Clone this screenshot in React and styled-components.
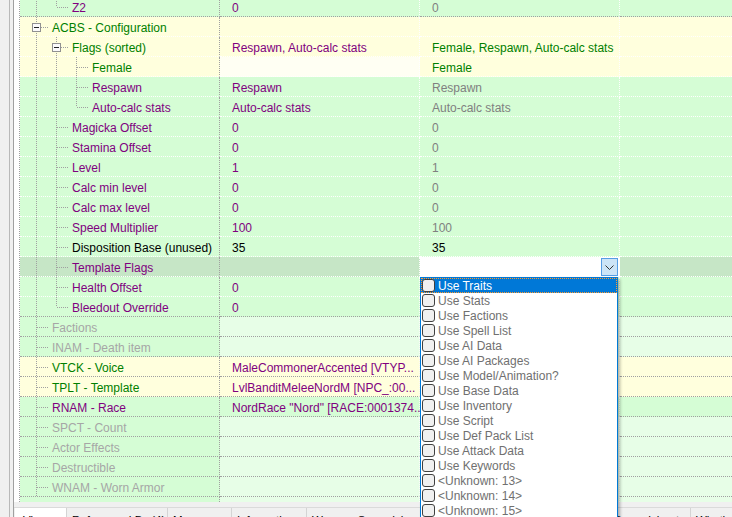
import React from 'react';
import styled, {createGlobalStyle} from 'styled-components';

const PURPLE = '#800080';
const GREEN = '#008000';
const GRAY = '#808080';
const FADED = '#a6a6a6';
const BLACK = '#000000';
const LINE = '#a0a0a0';

const TONES = {
  g: '#d5fdd5',
  y: '#ffffdd',
  p: '#fffff3',
  l: '#e7fee7',
  s: '#c6e6c6',
  w: '#ffffff',
};

const ROWS = [
  {label: 'Z2', level: 2, v2: '0', v3: '0'},
  {label: 'ACBS - Configuration', level: 1, kids: true, color: GREEN, tones: 'yyyy'},
  {label: 'Flags (sorted)', level: 2, kids: true, color: GREEN, v2: 'Respawn, Auto-calc stats', v3: 'Female, Respawn, Auto-calc stats', c3: GREEN, tones: 'yyyy'},
  {label: 'Female', level: 3, color: GREEN, v3: 'Female', c3: GREEN, tones: 'ypyy'},
  {label: 'Respawn', level: 3, v2: 'Respawn', v3: 'Respawn'},
  {label: 'Auto-calc stats', level: 3, v2: 'Auto-calc stats', v3: 'Auto-calc stats'},
  {label: 'Magicka Offset', level: 2, v2: '0', v3: '0'},
  {label: 'Stamina Offset', level: 2, v2: '0', v3: '0'},
  {label: 'Level', level: 2, v2: '1', v3: '1'},
  {label: 'Calc min level', level: 2, v2: '0', v3: '0'},
  {label: 'Calc max level', level: 2, v2: '0', v3: '0'},
  {label: 'Speed Multiplier', level: 2, v2: '100', v3: '100'},
  {label: 'Disposition Base (unused)', level: 2, color: BLACK, v2: '35', c2: BLACK, v3: '35', c3: BLACK},
  {label: 'Template Flags', level: 2, tones: 'ssws', editor: true},
  {label: 'Health Offset', level: 2, v2: '0', v3: '0'},
  {label: 'Bleedout Override', level: 2, v2: '0', v3: '0'},
  {label: 'Factions', level: 1, color: FADED, tones: 'glll'},
  {label: 'INAM - Death item', level: 1, color: FADED, tones: 'glll'},
  {label: 'VTCK - Voice', level: 1, color: GREEN, v2: 'MaleCommonerAccented [VTYP...', tones: 'yyyy'},
  {label: 'TPLT - Template', level: 1, color: GREEN, v2: 'LvlBanditMeleeNordM [NPC_:00...', tones: 'yyyy'},
  {label: 'RNAM - Race', level: 1, v2: 'NordRace "Nord" [RACE:0001374...'},
  {label: 'SPCT - Count', level: 1, color: FADED, tones: 'glll'},
  {label: 'Actor Effects', level: 1, color: FADED, tones: 'glll'},
  {label: 'Destructible', level: 1, color: FADED, tones: 'glll'},
  {label: 'WNAM - Worn Armor', level: 1, color: FADED, tones: 'glll'},
];

const FLAGS = [
  'Use Traits', 'Use Stats', 'Use Factions', 'Use Spell List', 'Use AI Data',
  'Use AI Packages', 'Use Model/Animation?', 'Use Base Data', 'Use Inventory',
  'Use Script', 'Use Def Pack List', 'Use Attack Data', 'Use Keywords',
  '<Unknown: 13>', '<Unknown: 14>', '<Unknown: 15>',
];

const TABS = [
  {label: 'View', width: 52, active: true},
  {label: 'Referenced By (4)', width: 101},
  {label: 'Messages', width: 64},
  {label: 'Information', width: 75},
  {label: 'Weapon Spreadsheet', width: 120},
  {label: 'Armor Spreadsheet', width: 118},
  {label: 'Ammunition Spreadsheet', width: 146},
  {label: "What's New", width: 70},
];

// works out which guide lines carry on past each row
const treeRows = ROWS.map((row, i) => {
  const continues = lvl => {
    for (let j = i + 1; j < ROWS.length; j++) {
      if (ROWS[j].level <= lvl) return ROWS[j].level === lvl;
    }
    return true;
  };
  const cont = {};
  for (let l = 1; l < row.level; l++) cont[l] = continues(l);
  const next = ROWS[i + 1];
  return {
    color: PURPLE, c2: PURPLE, c3: GRAY, tones: 'gggg',
    ...row,
    cont,
    hasNext: continues(row.level),
    boundary: !next || next.level === 1,
  };
});

const GlobalStyle = createGlobalStyle`
  html, body {
    margin: 0;
    padding: 0;
    background: #f0f0f0;
  }
  body {
    font-family: "Liberation Sans", Arial, sans-serif;
    font-size: 12px;
  }
`;

const Window = styled.div`
  width: 732px;
  height: 517px;
  overflow: hidden;
  display: flex;
  background: #f0f0f0;
`;

const SideStrip = styled.div`
  width: 13px;
  flex: none;
  border-right: 1px solid #a0a0a0;
  background: linear-gradient(to right, #f0f0f0 9px, #b9b9b9 9px, #b9b9b9 10px, #f0f0f0 10px);
`;

const Main = styled.div`
  flex: 1;
  min-width: 0;
  display: flex;
  flex-direction: column;
`;

const TreeFrame = styled.div`
  height: 502px;
  flex: none;
  display: flex;
  background: #ffffff;
  padding-left: 5px;
`;

const Tree = styled.div`
  flex: 1;
  min-width: 0;
  align-self: flex-start;
  height: 505px;
  margin-top: -3px;
  display: flex;
  flex-direction: column;
  border-left: 1px dotted ${LINE};
`;

const Row = styled.div`
  display: flex;
  flex: ${p => p.$fill ? '1' : 'none'};
  height: ${p => p.$fill ? 'auto' : '20px'};
`;

const Cell = styled.div`
  position: relative;
  box-sizing: border-box;
  display: flex;
  align-items: flex-start;
  flex: ${p => p.$grow ? '1 1 auto' : 'none'};
  width: ${p => p.$grow ? 'auto' : '200px'};
  min-width: 0;
  background: ${p => TONES[p.$tone]};
  border-bottom: ${p => p.$rule ? `1px dotted ${p.$rule}` : 'none'};
  border-right: ${p => p.$edge ? `1px dotted ${p.$edge}` : 'none'};
`;

const Text = styled.span`
  flex: 1;
  min-width: 0;
  white-space: nowrap;
  padding: 2px 0 0 ${p => p.$pad}px;
  line-height: 19px;
  color: ${p => p.$color};
`;

const Gutter = styled.svg`
  display: block;
  flex: none;
`;

const Editor = styled.div`
  flex: 1;
  height: 19px;
  display: flex;
  justify-content: flex-end;
  padding: 1px 1px 0 0;
  box-sizing: border-box;
`;

const DropButton = styled.div`
  width: 17px;
  height: 18px;
  box-sizing: border-box;
  background: #cce4f7;
  border: 1px solid #569de5;
  display: flex;
  align-items: center;
  justify-content: center;
`;

const DropList = styled.div`
  position: absolute;
  left: 0;
  top: 20px;
  width: 198px;
  height: 260px;
  z-index: 5;
  box-sizing: border-box;
  background: #ffffff;
  border: 1px solid #0078d7;
  box-shadow: 2px 2px 3px rgba(0, 0, 0, 0.3);
  display: flex;
  flex-direction: column;
`;

const FlagItem = styled.div`
  height: 15px;
  flex: none;
  display: flex;
  align-items: center;
  gap: 3px;
  padding-left: 1px;
  background: ${p => p.$active ? '#0078d7' : 'transparent'};
  color: ${p => p.$active ? '#ffffff' : '#707070'};
  outline: ${p => p.$active ? '1px dotted #ff9a2e' : 'none'};
  outline-offset: -1px;
  white-space: nowrap;
`;

const FlagLabel = styled.span`
  align-self: stretch;
  box-sizing: border-box;
  padding-top: 1px;
  line-height: 15px;
`;

const CheckBox = styled.span`
  width: 13px;
  height: 13px;
  box-sizing: border-box;
  flex: none;
  border: 1px solid #404040;
  border-radius: 3px;
  background: #f0f0f0;
`;

const TabStrip = styled.div`
  margin-top: 5px;
  flex: 1;
  display: flex;
  padding-left: 1px;
  border-top: 1px solid #dadada;
`;

const Tab = styled.div`
  width: ${p => p.$width}px;
  flex: none;
  box-sizing: border-box;
  padding: 3px 0 0 ${p => p.$active ? 8 : 5}px;
  font-size: 11.5px;
  line-height: 19px;
  white-space: nowrap;
  overflow: hidden;
  color: #000000;
  background: ${p => p.$active ? '#ffffff' : '#f0f0f0'};
  border-right: 1px solid #d4d4d4;
`;

const TreeLines = ({level, cont, hasNext, kids}) => {
  const width = 12 + level * 20;
  const xv = level * 20 - 4;
  const lines = [];
  for (let l = 1; l < level; l++) {
    if (cont[l]) {
      const x = l * 20 - 4 + 0.5;
      lines.push(<line key={l} x1={x} y1={0} x2={x} y2={20}/>);
    }
  }
  lines.push(<line key="up" x1={xv + 0.5} y1={0} x2={xv + 0.5} y2={10}/>);
  if (hasNext) lines.push(<line key="down" x1={xv + 0.5} y1={10} x2={xv + 0.5} y2={20}/>);
  lines.push(<line key="arm" x1={kids ? xv + 5 : xv + 1} y1={10.5} x2={xv + 13} y2={10.5}/>);

  return (
    <Gutter width={width} height={19} viewBox={`0 0 ${width} 19`}>
      <g stroke={LINE} strokeDasharray="1 1" shapeRendering="crispEdges">{lines}</g>
      {kids && (
        <g shapeRendering="crispEdges">
          <rect x={xv - 3.5} y={6.5} width={8} height={8} fill="#fbfbfb" stroke="#919191"/>
          <line x1={xv - 2} y1={10.5} x2={xv + 3} y2={10.5} stroke="#222"/>
        </g>
      )}
    </Gutter>
  );
};

const TemplateFlagsEditor = () => (
  <Editor>
    <DropButton>
      <svg width="9" height="5" viewBox="0 0 9 5">
        <polyline points="0.5,0.5 4.5,4.5 8.5,0.5" fill="none" stroke="#333" strokeWidth="1"/>
      </svg>
    </DropButton>
    <DropList>
      {FLAGS.map((flag, i) => (
        <FlagItem key={flag} $active={i === 0}>
          <CheckBox/>
          <FlagLabel>{flag}</FlagLabel>
        </FlagItem>
      ))}
    </DropList>
  </Editor>
);

const TreeRow = ({row}) => {
  const [t1, t2, t3, t4] = row.tones.split('');
  const rule = row.boundary ? LINE : '#ffffff';
  return (
    <Row>
      <Cell $tone={t1} $rule={rule} $edge={LINE}>
        <TreeLines level={row.level} cont={row.cont} hasNext={row.hasNext} kids={row.kids}/>
        <Text $pad={0} $color={row.color}>{row.label}</Text>
      </Cell>
      <Cell $tone={t2} $rule={rule} $edge="#ffffff">
        <Text $pad={12} $color={row.c2}>{row.v2}</Text>
      </Cell>
      <Cell $tone={t3} $rule={row.editor ? '#ffffff' : rule} $edge="#ffffff">
        {row.editor
          ? <TemplateFlagsEditor/>
          : <Text $pad={12} $color={row.c3}>{row.v3}</Text>}
      </Cell>
      <Cell $tone={t4} $rule={rule} $grow/>
    </Row>
  );
};

const App = () => (
  <>
    <GlobalStyle/>
    <Window>
      <SideStrip/>
      <Main>
        <TreeFrame>
          <Tree>
            {treeRows.map(row => <TreeRow key={row.label} row={row}/>)}
            <Row $fill>
              <Cell $tone="g" $edge={LINE}/>
              <Cell $tone="l" $edge="#ffffff"/>
              <Cell $tone="l" $edge="#ffffff"/>
              <Cell $tone="l" $grow/>
            </Row>
          </Tree>
        </TreeFrame>
        <TabStrip>
          {TABS.map(tab => (
            <Tab key={tab.label} $width={tab.width} $active={tab.active}>{tab.label}</Tab>
          ))}
        </TabStrip>
      </Main>
    </Window>
  </>
);

export default App;
